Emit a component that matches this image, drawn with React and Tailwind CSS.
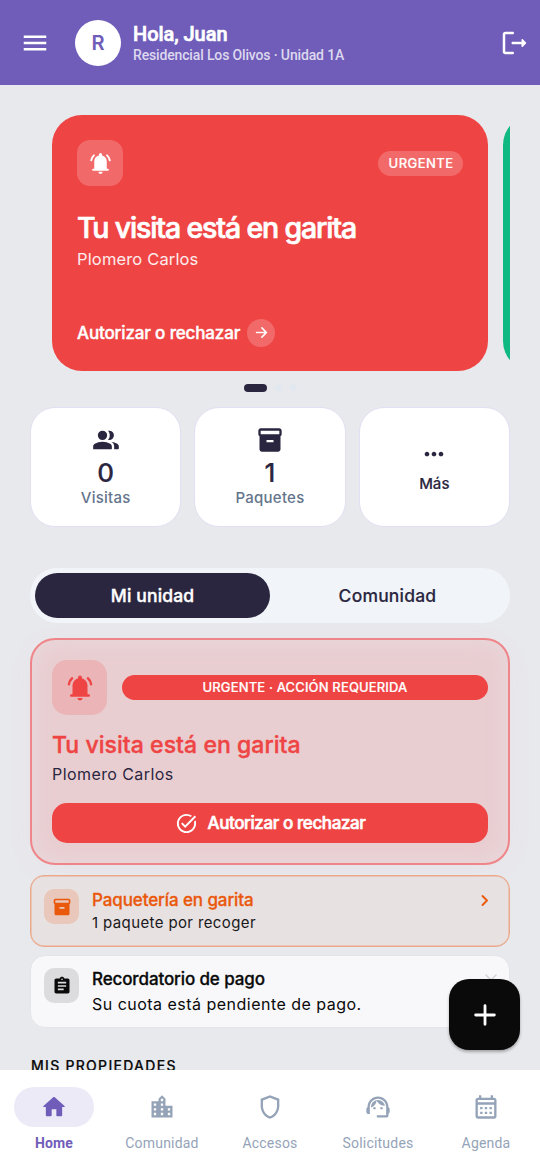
import React from "react";
import {
  MdMenu,
  MdInventory2,
  MdMoreHoriz,
  MdTaskAlt,
  MdAssignment,
  MdLocationCity,
  MdOutlineShield,
  MdSupportAgent,
  MdOutlineCalendarMonth,
} from "react-icons/md";

function BellIcon({ className }) {
  return (
    <svg viewBox="0 0 24 24" fill="currentColor" className={className}>
      <path d="M5 19q-.425 0-.712-.288T4 18t.288-.712T5 17h1v-7q0-2.075 1.25-3.687T10.5 4.2v-.7q0-.625.438-1.062T12 2t1.063.438T13.5 3.5v.7q2 .5 3.25 2.113T18 10v7h1q.425 0 .713.288T20 18t-.288.713T19 19zM12 22q-.825 0-1.412-.587T10 20h4q0 .825-.587 1.413T12 22" />
      <path d="M3.100 9Q3.500 6.100 5.700 4.200M20.900 9Q20.500 6.100 18.300 4.200" fill="none" stroke="currentColor" strokeWidth="1.900" strokeLinecap="round" />
    </svg>
  );
}

function PeopleIcon({ className }) {
  return (
    <svg viewBox="0 0 24 24" fill="currentColor" className={className}>
      <path d="M9 12a4 4 0 1 0 0-8 4 4 0 0 0 0 8zM1 20v-2.500c0-1 .5-1.800 1.400-2.300C4.300 14.100 6.500 13.500 9 13.500s4.700.6 6.600 1.700c.9.5 1.400 1.300 1.400 2.300V20zM13.700 11.900c1-1 1.500-2.400 1.500-3.900s-.5-2.900-1.500-3.900c.4-.1.800-.1 1.100-.1a4 4 0 0 1 0 8c-.3 0-.7 0-1.100-.1zM19 20v-2.500c0-1.600-.8-2.800-2.300-3.900 1.700.3 3.200.8 4.500 1.500 1.100.6 1.800 1.400 1.800 2.400V19c0 .6-.4 1-1 1z" />
    </svg>
  );
}

function HomeIcon({ className }) {
  return (
    <svg viewBox="0 0 24 24" fill="currentColor" className={className}>
      <path d="M10 19v-5h4v5c0 .55.45 1 1 1h3c.55 0 1-.45 1-1v-7h1.7c.46 0 .68-.57.33-.87L12.67 3.6c-.38-.34-.96-.34-1.34 0l-8.36 7.53c-.34.3-.13.87.33.87H5v7c0 .55.45 1 1 1h3c.55 0 1-.45 1-1z" />
    </svg>
  );
}

function LogoutIcon({ className }) {
  return (
    <svg viewBox="0 0 24 24" fill="currentColor" className={className}>
      <path d="M5 5h6c.55 0 1-.45 1-1s-.45-1-1-1H5c-1.100 0-2 .9-2 2v14c0 1.100.9 2 2 2h6c.55 0 1-.45 1-1s-.45-1-1-1H5V5z" />
      <path d="m21.650 11.650-2.790-2.790c-.32-.32-.86-.1-.86.350V11h-7c-.55 0-1 .45-1 1s.45 1 1 1h7v1.790c0 .45.540.67.850.350l2.790-2.790c.2-.19.2-.51.010-.7z" />
    </svg>
  );
}

function ArrowIcon({ className }) {
  return (
    <svg viewBox="0 0 24 24" fill="none" stroke="currentColor" strokeWidth="2.200" strokeLinecap="round" strokeLinejoin="round" className={className}>
      <path d="M5 12h14M12.500 5.500 19 12l-6.500 6.500" />
    </svg>
  );
}

function StatCard({ Icon, value, label }) {
  return (
    <div className="flex h-[120px] flex-col items-center rounded-[25px] border border-[#e2def3] bg-white pt-[18px] text-[#2b2640]">
      <Icon className="size-[28px]" />
      <span className="mt-[3px] text-[26px] leading-[31px] font-medium [-webkit-text-stroke:0.2px]">{value}</span>
      <span className="text-[15px] leading-[20px] font-medium tracking-[0.250px] text-[#64748b]">{label}</span>
    </div>
  );
}

const navItems = [
  { label: "Home", Icon: HomeIcon, active: true },
  { label: "Comunidad", Icon: MdLocationCity },
  { label: "Accesos", Icon: MdOutlineShield },
  { label: "Solicitudes", Icon: MdSupportAgent },
  { label: "Agenda", Icon: MdOutlineCalendarMonth },
];

export default function App() {
  return (
    <div className="relative flex h-[1170px] w-[540px] flex-col overflow-hidden bg-[#e8e9ed] font-[Inter,sans-serif]">
      <header className="flex h-[85px] shrink-0 items-center bg-[#6f5db9] pr-[11px] pl-[20px] font-[Roboto,sans-serif] text-white">
        <MdMenu className="size-[30px]" />
        <div className="ml-[25px] flex size-[46px] items-center justify-center rounded-full bg-white font-[Inter,sans-serif] text-[20px] font-semibold text-[#6f5db9]">R</div>
        <div className="ml-[12px] flex flex-col pt-[2px]">
          <span className="text-[20px] leading-[23px] font-medium tracking-[-0.050px] [-webkit-text-stroke:0.6px]">Hola, Juan</span>
          <span className="text-[14px] leading-[18px] font-medium tracking-[-0.150px] text-[#ddd8ee]">Residencial Los Olivos · Unidad 1A</span>
        </div>
        <LogoutIcon className="ml-auto size-[30px]" />
      </header>

      <main className="flex min-h-0 flex-1 flex-col overflow-hidden px-[30px] pt-[30px]">
        <div className="flex h-[257px] shrink-0 gap-[15px] overflow-hidden pl-[22px]">
          <section className="flex h-[256px] w-[436px] shrink-0 flex-col rounded-[30px] bg-[#ef4444] px-[25px] pt-[25px] text-white">
            <div className="flex items-center justify-between">
              <div className="flex size-[46px] items-center justify-center rounded-[13px] bg-white/20">
                <BellIcon className="size-[25px]" />
              </div>
              <span className="flex h-[25px] items-center rounded-full bg-white/20 pt-px pr-[9.500px] pl-[10.500px] text-[13px] font-medium tracking-[0.450px] [-webkit-text-stroke:0.2px]">URGENTE</span>
            </div>
            <h2 className="mt-[24px] text-[28.500px] leading-[36px] font-medium tracking-[-1.150px] [-webkit-text-stroke:0.7px]">Tu visita está en garita</h2>
            <p className="mt-[2px] text-[16.500px] leading-[23px] tracking-[0.150px] text-white/90">Plomero Carlos</p>
            <div className="mt-[47px] flex items-center gap-[7px]">
              <span className="pt-px text-[17px] leading-[28px] font-medium tracking-[-0.140px] [-webkit-text-stroke:0.4px]">Autorizar o rechazar</span>
              <span className="flex size-[28px] items-center justify-center rounded-full bg-white/20">
                <ArrowIcon className="size-[17px]" />
              </span>
            </div>
          </section>
          <section className="h-[256px] w-[436px] shrink-0 rounded-[30px] bg-[#10b981]" />
        </div>

        <div className="mt-[12px] flex h-[8px] shrink-0 justify-center gap-[8px]">
          <span className="h-[8px] w-[23px] rounded-full bg-[#2b2640]" />
          <span className="size-[7px] rounded-full bg-[#e2e8f0]" />
          <span className="size-[7px] rounded-full bg-[#e2e8f0]" />
        </div>

        <div className="mt-[15px] grid shrink-0 grid-cols-3 gap-[13px]">
          <StatCard Icon={PeopleIcon} value="0" label="Visitas" />
          <StatCard Icon={MdInventory2} value="1" label="Paquetes" />
          <div className="flex h-[120px] flex-col items-center rounded-[25px] border border-[#e2def3] bg-white pt-[32px] text-[#2b2640]">
            <MdMoreHoriz className="size-[28px]" />
            <span className="mt-[6px] text-[15px] leading-[20px] font-medium [-webkit-text-stroke:0.15px]">Más</span>
          </div>
        </div>

        <div className="mt-[41px] flex h-[55px] shrink-0 rounded-full bg-[#f1f5f9] p-[5px] text-[17.500px] font-medium text-[#2b2640]">
          <div className="flex flex-1 items-center justify-center rounded-full bg-[#2b2640] pt-px tracking-[0.150px] text-white [-webkit-text-stroke:0.4px]">Mi unidad</div>
          <div className="flex flex-1 items-center justify-center pt-px tracking-[0.2px] [-webkit-text-stroke:0.15px]">Comunidad</div>
        </div>

        <section className="mt-[15px] flex h-[227px] shrink-0 flex-col rounded-[25px] border-2 border-[#ef8588] bg-[#e9ced1] px-[20px] pt-[20px] shadow-[0_5px_30px_rgba(239,68,68,0.04),inset_0_0_22px_rgba(232,222,226,0.75)]">
          <div className="flex items-center gap-[15px]">
            <div className="flex size-[55px] items-center justify-center rounded-[15px] bg-[#ebb4b7] text-[#ef4444]">
              <BellIcon className="size-[30px]" />
            </div>
            <span className="flex h-[25px] flex-1 items-center justify-center rounded-full bg-[#ef4444] pt-px text-[13px] font-medium tracking-[0.150px] text-white [-webkit-text-stroke:0.2px]">URGENTE · ACCIÓN REQUERIDA</span>
          </div>
          <h3 className="mt-[15px] text-[23px] leading-[30px] font-medium tracking-[0.050px] text-[#ef4444] [-webkit-text-stroke:0.4px]">Tu visita está en garita</h3>
          <p className="mt-[3px] text-[16px] leading-[22px] tracking-[0.420px] text-[#2b2640]">Plomero Carlos</p>
          <button className="mt-[18px] flex h-[40px] items-center justify-center gap-[10px] rounded-[15px] bg-[#ef4444] text-[17px] font-medium tracking-[-0.400px] text-white [-webkit-text-stroke:0.6px]">
            <MdTaskAlt className="size-[23px] [stroke-width:0]" />
            <span className="pt-px">Autorizar o rechazar</span>
          </button>
        </section>

        <section className="mt-[10px] flex h-[72px] shrink-0 rounded-[14px] border-[1.500px] border-[#eba98b] bg-[#e8e1e1] pt-[13px] pl-[13px] shadow-[inset_0_0_0_0.500px_#eba98b]">
          <div className="flex size-[35px] items-center justify-center rounded-[10px] bg-[#e9c8bb] text-[#ea580c]">
            <MdInventory2 className="size-[20px]" />
          </div>
          <div className="ml-[13px] flex flex-col">
            <span className="text-[17px] leading-[23px] font-medium tracking-[-0.100px] text-[#ea580c] [-webkit-text-stroke:0.3px]">Paquetería en garita</span>
            <span className="text-[15px] leading-[22px] tracking-[0.380px] text-[#18181b]">1 paquete por recoger</span>
          </div>
          <svg viewBox="0 0 24 24" className="mr-[12px] ml-auto size-[24px] text-[#ea580c]" fill="none" stroke="currentColor" strokeWidth="1.900" strokeLinecap="round" strokeLinejoin="round">
            <path d="m9.500 7 4.500 4.500-4.500 4.500" />
          </svg>
        </section>

        <section className="mt-[8px] flex h-[73px] shrink-0 rounded-[15px] border border-[#e4e5e9] bg-[#f8f8fa] pt-[12px] pl-[13px]">
          <div className="flex size-[35px] items-center justify-center rounded-[10px] bg-[#dcdcde] text-[#0a0a0a]">
            <MdAssignment className="size-[20px]" />
          </div>
          <div className="ml-[13px] flex flex-col text-[#0a0a0a]">
            <span className="text-[17px] leading-[23px] font-medium tracking-[-0.120px] [-webkit-text-stroke:0.3px]">Recordatorio de pago</span>
            <span className="mt-[2px] text-[16px] leading-[23px] tracking-[0.480px]">Su cuota está pendiente de pago.</span>
          </div>
          <svg viewBox="0 0 24 24" className="mt-[2px] mr-[8px] ml-auto size-[20px] text-[#d3d4d9]" fill="none" stroke="currentColor" strokeWidth="1.800" strokeLinecap="round">
            <path d="m6 6 12 12M18 6 6 18" />
          </svg>
        </section>

        <h4 className="mt-[28px] pl-px text-[14px] leading-[20px] font-medium tracking-[1.280px] text-[#0a0a0a] [-webkit-text-stroke:0.2px]">MIS PROPIEDADES</h4>
      </main>

      <button className="absolute top-[979px] left-[449px] flex size-[71px] items-center justify-center rounded-[20px] bg-[#0a0a0a] text-white shadow-[0_2px_3px_rgba(0,0,0,0.3)]">
        <svg viewBox="0 0 24 24" className="size-[32px]" fill="none" stroke="currentColor" strokeWidth="2.100" strokeLinecap="round">
          <path d="M12 5v14M5 12h14" />
        </svg>
      </button>

      <nav className="grid h-[100px] shrink-0 grid-cols-5 bg-white pt-[17px] font-[Roboto,sans-serif]">
        {navItems.map(({ label, Icon, active }) => (
          <div key={label} className={active ? "flex flex-col items-center text-[#6f5db9]" : "flex flex-col items-center text-[#94a3b8]"}>
            <span className={active ? "flex h-[40px] w-[80px] items-center justify-center rounded-full bg-[#edeaf7]" : "flex h-[40px] w-[80px] items-center justify-center"}>
              <Icon className="size-[28px]" />
            </span>
            <span className={active ? "mt-[7px] text-[14px] leading-[18px] font-bold tracking-[0.150px]" : "mt-[7px] text-[14px] leading-[18px] tracking-[0.200px]"}>{label}</span>
          </div>
        ))}
      </nav>
    </div>
  );
}
